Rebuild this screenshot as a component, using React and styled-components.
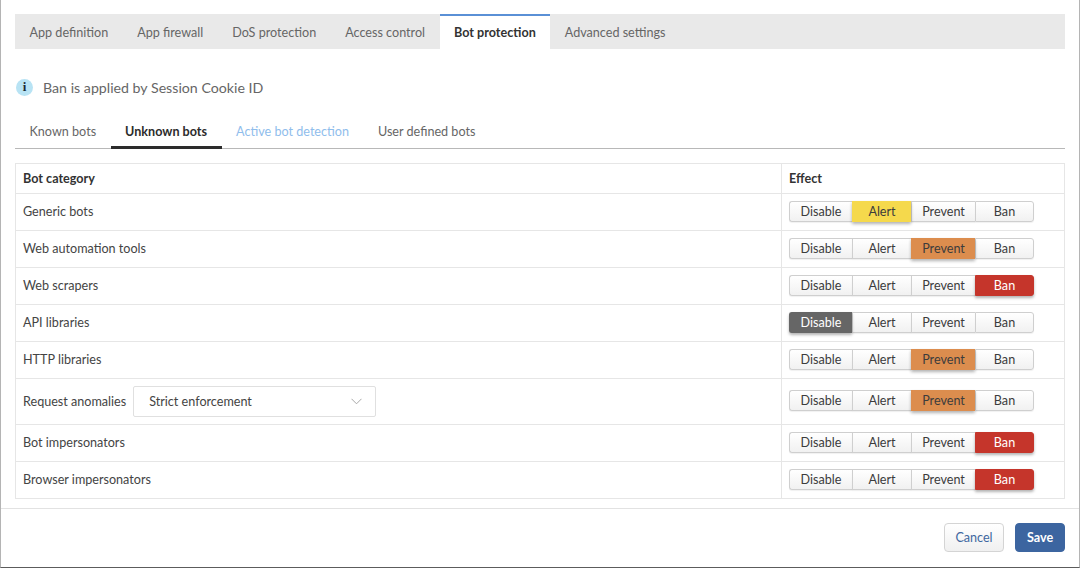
import React from "react";
import styled, { createGlobalStyle } from "styled-components";

const Global = createGlobalStyle`
  html, body { margin: 0; padding: 0; background: #fff; }
  body { font-family: Lato, "Liberation Sans", sans-serif; }
`;

const Page = styled.div`
  box-sizing: border-box;
  width: 1080px;
  height: 568px;
  display: flex;
  flex-direction: column;
  border-left: 1px solid #b4b4b4;
  border-right: 1px solid #b4b4b4;
  border-bottom: 1px solid #5c5c5c;
  overflow: hidden;
`;

const Body = styled.div`
  flex: 1;
  padding: 14px 14px 0 14px;
`;

const TabBar = styled.div`
  display: flex;
  height: 35px;
  background: #e9e9e9;
`;

const Tab = styled.div`
  box-sizing: border-box;
  height: 35px;
  padding: ${(p) => (p.$active ? "0 14.5px" : "2px 14.5px 0")};
  display: flex;
  align-items: center;
  font-size: 12.6px;
  color: ${(p) => (p.$active ? "#333" : "#666")};
  font-weight: ${(p) => (p.$active ? 700 : 400)};
  background: ${(p) => (p.$active ? "#fff" : "transparent")};
  border-top: ${(p) => (p.$active ? "2px solid #5a90d6" : "none")};
`;

const InfoRow = styled.div`
  display: flex;
  align-items: center;
  gap: 10px;
  height: 18px;
  margin: 29px 0 0 1px;
  font-size: 14.2px;
  color: #666;
`;

const InfoIcon = styled.span`
  width: 17px;
  height: 17px;
  border-radius: 50%;
  background: #b8e3f4;
  color: #1c2a33;
  display: flex;
  align-items: center;
  justify-content: center;
  font-family: "Liberation Serif", serif;
  font-weight: 700;
  font-size: 13px;
`;

const SubTabs = styled.div`
  display: flex;
  height: 35px;
  margin-top: 17px;
  border-bottom: 1px solid #b8b8b8;
`;

const SubTab = styled.div`
  box-sizing: border-box;
  height: 36px;
  padding: ${(p) => (p.$active ? 4 : 1)}px 14.5px 0;
  display: flex;
  align-items: center;
  font-size: 12.6px;
  color: ${(p) => (p.$active ? "#2c2c2c" : p.$disabled ? "#8fbdec" : "#666")};
  font-weight: ${(p) => (p.$active ? 700 : 400)};
  border-bottom: ${(p) => (p.$active ? "3px solid #2c2c2c" : "none")};
`;

const Table = styled.div`
  margin-top: 14px;
  border: 1px solid #e6e6e6;
`;

const Row = styled.div`
  display: grid;
  grid-template-columns: 765px 1fr;
  height: ${(p) => p.$h}px;
  box-sizing: border-box;
  border-top: ${(p) => (p.$first ? "none" : "1px solid #e6e6e6")};
`;

const NameCell = styled.div`
  display: flex;
  align-items: center;
  gap: 7px;
  padding: 0 0 ${(p) => (p.$flush ? 0 : 2)}px 7px;
  font-size: 12.6px;
  color: ${(p) => (p.$head ? "#333" : "#444")};
  font-weight: ${(p) => (p.$head ? 700 : 400)};
`;

const EffectCell = styled.div`
  display: flex;
  align-items: center;
  padding: 0 0 ${(p) => (p.$flush ? 0 : 2)}px 7px;
  border-left: 1px solid #e6e6e6;
  font-size: 12.6px;
  color: #333;
  font-weight: ${(p) => (p.$head ? 700 : 400)};
`;

const Select = styled.div`
  box-sizing: border-box;
  width: 243px;
  height: 31px;
  padding: 0 13px 0 15px;
  display: flex;
  align-items: center;
  justify-content: space-between;
  border: 1px solid #e0e0e0;
  border-radius: 2px;
  font-size: 12.6px;
  color: #444;
`;

const Segments = styled.div`
  display: flex;
  height: 21px;
`;

const colours = {
  Disable: ["#666666", "#fff"],
  Alert: ["#f5d94c", "#3c3c3c"],
  Prevent: ["#dc8d4e", "#3c3c3c"],
  Ban: ["#c5352b", "#fff"],
};

const Segment = styled.div`
  box-sizing: border-box;
  width: ${(p) => p.$w}px;
  display: flex;
  align-items: center;
  justify-content: center;
  font-size: 12.6px;
  color: ${(p) => (p.$on ? colours[p.$label][1] : "#3c3c3c")};
  background: ${(p) =>
    p.$on ? colours[p.$label][0] : "linear-gradient(#ffffff, #f1f1f1)"};
  border: 1px solid ${(p) => (p.$on ? colours[p.$label][0] : "#cfcfcf")};
  border-right-width: ${(p) => (p.$end ? 1 : 0)}px;
  border-radius: ${(p) =>
    p.$start ? "3px 0 0 3px" : p.$end ? "0 3px 3px 0" : "0"};
  box-shadow: ${(p) =>
    p.$on ? "0 2px 3px rgba(0,0,0,0.3)" : "0 1px 1px rgba(0,0,0,0.06)"};
  position: relative;
  z-index: ${(p) => (p.$on ? 1 : 0)};
`;

const Footer = styled.div`
  height: 59px;
  box-sizing: border-box;
  border-top: 1px solid #e2e2e2;
  display: flex;
  justify-content: flex-end;
  align-items: flex-start;
  gap: 11px;
  padding: 14px 14px 0 0;
`;

const Button = styled.button`
  box-sizing: border-box;
  height: 29px;
  width: ${(p) => p.$w}px;
  padding: 0;
  border-radius: 4px;
  font-family: Lato, "Liberation Sans", sans-serif;
  font-size: 12.6px;
  color: ${(p) => (p.$primary ? "#fff" : "#3f67a0")};
  background: ${(p) =>
    p.$primary ? "#3c65a0" : "linear-gradient(#ffffff, #f0f0f0)"};
  border: 1px solid ${(p) => (p.$primary ? "#3c65a0" : "#d4d4d4")};
  font-weight: ${(p) => (p.$primary ? 700 : 400)};
`;

const tabs = ["App definition", "App firewall", "DoS protection", "Access control", "Bot protection", "Advanced settings"];
const widths = { Disable: 63, Alert: 59, Prevent: 64, Ban: 59 };
const rows = [
  ["Generic bots", "Alert", 37],
  ["Web automation tools", "Prevent", 37],
  ["Web scrapers", "Ban", 37],
  ["API libraries", "Disable", 37],
  ["HTTP libraries", "Prevent", 37],
  ["Request anomalies", "Prevent", 46, true],
  ["Bot impersonators", "Ban", 37],
  ["Browser impersonators", "Ban", 37],
];

const Effect = ({ value }) => (
  <Segments>
    {Object.keys(widths).map((k, i) => (
      <Segment key={k} $label={k} $w={widths[k]} $on={k === value} $start={i === 0} $end={i === 3}>
        {k}
      </Segment>
    ))}
  </Segments>
);

export default function App() {
  return (
    <Page>
      <Global />
      <Body>
        <TabBar>
          {tabs.map((t) => (
            <Tab key={t} $active={t === "Bot protection"}>{t}</Tab>
          ))}
        </TabBar>
        <InfoRow>
          <InfoIcon>i</InfoIcon>
          Ban is applied by Session Cookie ID
        </InfoRow>
        <SubTabs>
          <SubTab>Known bots</SubTab>
          <SubTab $active>Unknown bots</SubTab>
          <SubTab $disabled>Active bot detection</SubTab>
          <SubTab>User defined bots</SubTab>
        </SubTabs>
        <Table>
          <Row $h={29} $first>
            <NameCell $head $flush>Bot category</NameCell>
            <EffectCell $head $flush>Effect</EffectCell>
          </Row>
          {rows.map(([name, value, h, sel]) => (
            <Row key={name} $h={h}>
              <NameCell $flush={sel}>
                {name}
                {sel && (
                  <Select>
                    Strict enforcement
                    <svg width="11" height="7" viewBox="0 0 11 7" fill="none">
                      <path d="M0.5 0.8 L5.5 5.8 L10.5 0.8" stroke="#a8a8a8" strokeWidth="1" />
                    </svg>
                  </Select>
                )}
              </NameCell>
              <EffectCell><Effect value={value} /></EffectCell>
            </Row>
          ))}
        </Table>
      </Body>
      <Footer>
        <Button $w={60}>Cancel</Button>
        <Button $w={50} $primary>Save</Button>
      </Footer>
    </Page>
  );
}
